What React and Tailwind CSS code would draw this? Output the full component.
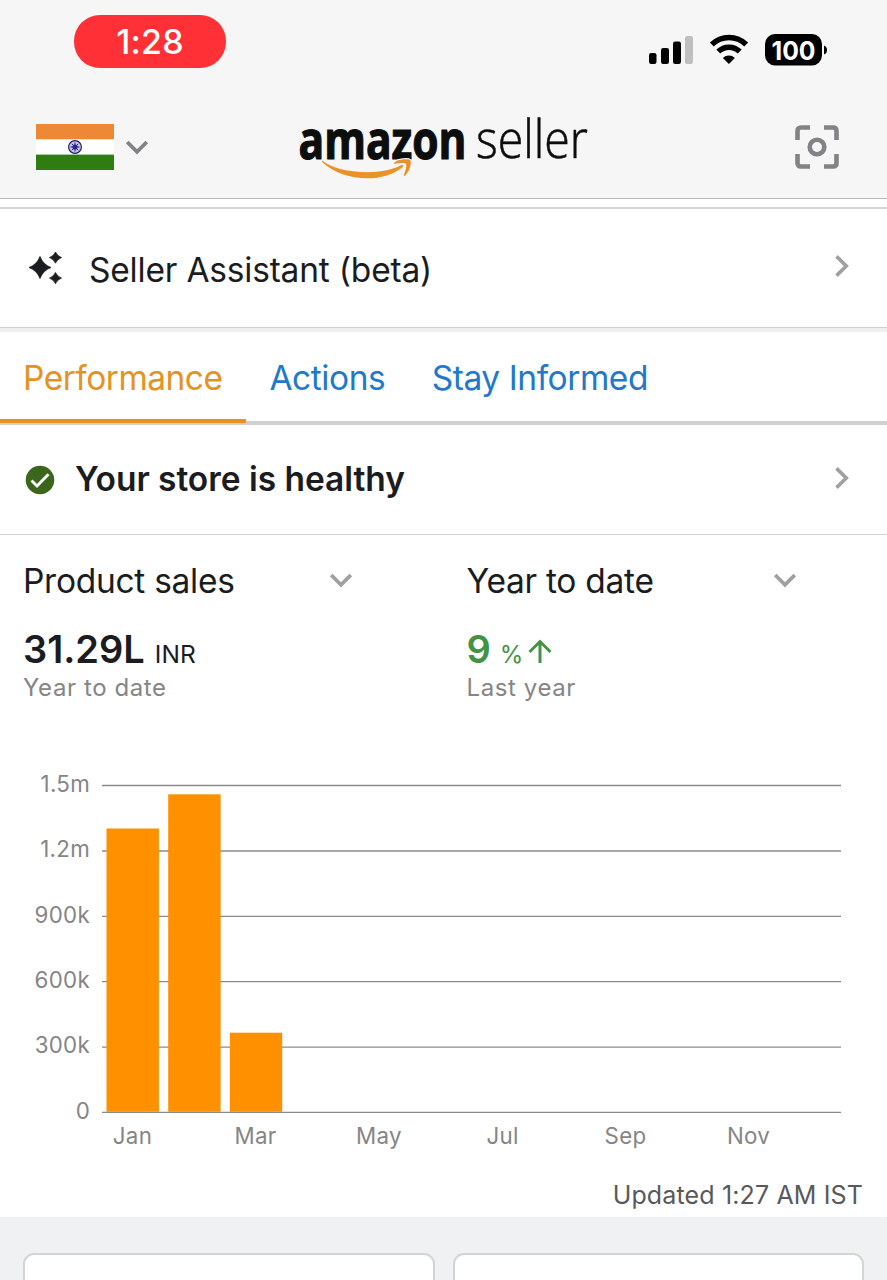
const tabs = [
  { label: 'Performance', active: true },
  { label: 'Actions' },
  { label: 'Stay Informed' },
]

const bars = [
  { month: 'Jan', x: 106.5, top: 68.5 },
  { month: 'Feb', x: 168.2, top: 34.3 },
  { month: 'Mar', x: 229.8, top: 272.7 },
]

const yTicks = [
  { label: '1.5m', y: 25.5 },
  { label: '1.2m', y: 91 },
  { label: '900k', y: 156.3 },
  { label: '600k', y: 221.6 },
  { label: '300k', y: 287.1 },
  { label: '0', y: 352.3 },
]

const xTicks = [
  { label: 'Jan', x: 132.5 },
  { label: 'Mar', x: 255.5 },
  { label: 'May', x: 379 },
  { label: 'Jul', x: 502.5 },
  { label: 'Sep', x: 625.5 },
  { label: 'Nov', x: 748.5 },
]

function ChevronRight() {
  return (
    <svg width="16" height="24" viewBox="0 0 16 24" fill="none" stroke="#a0a0a0" strokeWidth="3.6">
      <path d="M2.5 2.4 L12.3 12 L2.5 21.6" />
    </svg>
  )
}

function ChevronDown({ color = '#a0a0a0' }) {
  return (
    <svg width="24" height="16" viewBox="0 0 24 16" fill="none" stroke={color} strokeWidth="3.8">
      <path d="M2.2 2 L12 11.8 L21.8 2" />
    </svg>
  )
}

function StatusBar() {
  return (
    <div className="flex items-start justify-between pl-[74px] pr-[59px] pt-[15px]">
      <div className="flex h-[53px] w-[152px] items-center justify-center rounded-[26px] bg-[#ff3136] text-[34px] font-medium tracking-[0.2px] text-white">
        1:28
      </div>
      <div className="mt-[19px] flex">
        <svg width="180" height="32" viewBox="648 34 180 32">
          <rect x="649" y="53" width="7.5" height="11" rx="2.2" />
          <rect x="661" y="48" width="8" height="16" rx="2.2" />
          <rect x="673" y="41.5" width="8" height="22.5" rx="2.2" />
          <rect x="685" y="36" width="8" height="28" rx="2.2" fill="#bfbfbf" />
          <g fill="none" stroke="#000" strokeWidth="5.6">
            <path d="M711.8 44.6 A24.5 24.5 0 0 1 746.2 44.6" />
            <path d="M718.3 51.6 A15.4 15.4 0 0 1 739.7 51.6" />
          </g>
          <path d="M728.9 64 L722.9 58 A8.6 8.6 0 0 1 734.9 58 Z" />
          <rect x="765" y="34" width="57" height="31.5" rx="10" />
          <path d="M824 45.5 Q827 46.5 827 50 Q827 53.5 824 54.5 Z" />
          <text x="793.5" y="59.5" textAnchor="middle" textLength="44" fill="#fff" fontSize="26" fontWeight="700" fontFamily="Inter, sans-serif" lengthAdjust="spacingAndGlyphs">100</text>
        </svg>
      </div>
    </div>
  )
}

function IndiaFlag() {
  return (
    <svg width="78" height="46" viewBox="0 0 78 46">
      <rect width="78" height="46" fill="#fff" />
      <rect width="78" height="15.3" fill="#ed8936" />
      <rect y="30.6" width="78" height="15.4" fill="#2f7d12" />
      <circle cx="39" cy="23" r="6.4" fill="#c5c3e6" stroke="#26215f" strokeWidth="1.2" />
      <g stroke="#2a2389" strokeWidth="1">
        <path d="M34.5 23 H43.5 M39 18.5 V27.5 M35.8 19.8 L42.2 26.2 M35.8 26.2 L42.2 19.8" />
      </g>
      <circle cx="39" cy="23" r="2.6" fill="#2a2389" />
    </svg>
  )
}

function Logo() {
  return (
    <svg width="296" height="86" viewBox="298 96 296 86">
      <g fontFamily="Open Sans, sans-serif" fill="#0c0d0d" stroke="#0c0d0d">
        <text transform="translate(298.5 158.6) scale(0.8 1)" textLength="210" lengthAdjust="spacingAndGlyphs" fontSize="53" fontWeight="700" strokeWidth="1.2">amazon</text>
        <text transform="translate(476 158.3) scale(0.9 1)" textLength="124.4" lengthAdjust="spacingAndGlyphs" fontSize="52.5" fontWeight="300" strokeWidth="0.6">seller</text>
      </g>
      <g stroke="#f6f6f6" strokeWidth="2.4" fill="#ea9228" paintOrder="stroke">
        <path d="M323 161 C336 172.5 379 177 401 165.3 C402.7 164.3 403.8 166 402.6 167.3 C383 183.5 343 182 322.4 162.3 C321.6 161.2 322 160.4 323 161 Z" />
        <path d="M394 163 C398 158.8 408.5 158.7 410.3 160.3 C412 162.5 409.5 172 405.2 175.4 C404 176 403.4 175.5 404 174.3 C405.5 171 407 166 406 164 C404.6 162.5 399.5 163 395 163.7 C393.8 163.8 393.3 163.5 394 163 Z" />
      </g>
    </svg>
  )
}

function ScanIcon() {
  return (
    <svg width="44" height="44" viewBox="0 0 44 44" fill="none" stroke="#828287" strokeWidth="4.6">
      <path d="M2.5 15 V6 Q2.5 2.5 6 2.5 H15" />
      <path d="M29 2.5 H38 Q41.5 2.5 41.5 6 V15" />
      <path d="M41.5 29 V38 Q41.5 41.5 38 41.5 H29" />
      <path d="M15 41.5 H6 Q2.5 41.5 2.5 38 V29" />
      <circle cx="22" cy="22" r="7.3" />
    </svg>
  )
}

function Sparkles() {
  return (
    <svg width="36" height="34" viewBox="28 251 36 34" fill="#1b1c1f" stroke="#1b1c1f" strokeWidth="0.8" strokeLinejoin="round">
      <path d="M40 256.5 Q43 264.5 51 267.5 Q43 270.5 40 278.5 Q37 270.5 29 267.5 Q37 264.5 40 256.5 Z" />
      <path d="M55.5 252 Q57.2 256 61.5 257.6 Q57.2 259.2 55.5 263.2 Q53.8 259.2 49.5 257.6 Q53.8 256 55.5 252 Z" />
      <path d="M55.5 272.5 Q57.2 276.5 61.5 278.1 Q57.2 279.7 55.5 283.7 Q53.8 279.7 49.5 278.1 Q53.8 276.5 55.5 272.5 Z" />
    </svg>
  )
}

function Header() {
  return (
    <header className="h-[199px] shrink-0 border-b border-[#b9b9bb] bg-[#f6f6f6]">
      <StatusBar />
      <div className="mt-7 flex items-start pl-9">
        <div className="mt-7"><IndiaFlag /></div>
        <div className="ml-[11px] mt-11"><ChevronDown color="#828287" /></div>
        <div className="ml-[149px]"><Logo /></div>
        <div className="ml-[201px] mt-[29px]"><ScanIcon /></div>
      </div>
    </header>
  )
}

function Metric({ title, children, caption }) {
  return (
    <div className="w-[443.5px] pl-[23px]">
      <div className="flex items-center">
        <h2 className="w-[306px] text-[33.5px] leading-[40px] tracking-[-0.28px] text-[#1b1c1f]">{title}</h2>
        <ChevronDown />
      </div>
      <div className="mt-[25px] flex h-12 items-baseline">{children}</div>
      <p className="text-[24px] leading-[28px] tracking-[0.6px] text-[#858585]">{caption}</p>
    </div>
  )
}

function SalesChart() {
  return (
    <svg className="block" width="887" height="400" viewBox="0 0 887 400" fontFamily="Inter, sans-serif" fontSize="22.3" fill="#858585">
      {yTicks.map(t => (
        <g key={t.label}>
          <text x="90" y={t.y + 6.3} textAnchor="end" letterSpacing="0.3">{t.label}</text>
          <path d={`M102 ${t.y} H841`} stroke="#8a8a8a" strokeWidth="1.3" />
        </g>
      ))}
      {bars.map(b => (
        <rect key={b.month} x={b.x} y={b.top} width="52.4" height={351.8 - b.top} fill="#ff9100" />
      ))}
      {xTicks.map(t => (
        <text key={t.label} x={t.x} y="383.5" textAnchor="middle" letterSpacing="0.3">{t.label}</text>
      ))}
    </svg>
  )
}

export default function App() {
  return (
    <div className="flex h-[1280px] w-[887px] flex-col overflow-hidden bg-white font-['Inter',sans-serif]">
      <Header />
      <div className="mt-2 h-[2px] shrink-0 bg-[#d5d5d7]" />

      <div className="flex h-[118px] shrink-0 items-center pl-7 pr-[37px]">
        <Sparkles />
        <span className="ml-[25px] mt-[4px] flex-1 text-[33.5px] tracking-[-0.2px] text-[#1b1c1f]">Seller Assistant (beta)</span>
        <div className="-mt-[4px]"><ChevronRight /></div>
      </div>
      <div className="h-[5px] shrink-0 border-t border-[#cfcfcf] bg-[#f0f0f1]" />

      <nav className="flex h-[93px] shrink-0 border-b-4 border-[#d0d0d0]">
        {tabs.map(t => (
          <div
            key={t.label}
            className={
              t.active
                ? 'h-[91px] border-b-4 border-[#ea9220] pl-[23px] pr-6 pt-[21px] text-[33.5px] tracking-[-0.52px] text-[#e6921f]'
                : 'h-[91px] pl-[23px] pr-[23.5px] pt-[21px] text-[33.5px] tracking-[-0.44px] text-[#2179cb]'
            }
          >
            {t.label}
          </div>
        ))}
      </nav>

      <div className="flex h-[110px] shrink-0 items-center border-b border-[#d4d4d4] pl-[25px] pr-[37px]">
        <svg width="30" height="30" viewBox="0 0 30 30">
          <circle cx="15" cy="15" r="14.3" fill="#3b661c" />
          <path d="M6.5 15.5 L12 21 L23.5 9.2" fill="none" stroke="#fff" strokeWidth="2.8" />
        </svg>
        <span className="ml-5 flex-1 text-[33.5px] font-semibold tracking-[-0.04px] text-[#1b1c1f]">Your store is healthy</span>
        <div className="-mt-[4px]"><ChevronRight /></div>
      </div>

      <section className="flex shrink-0 pt-[26px]">
        <Metric title="Product sales" caption="Year to date">
          <span className="text-[38px] leading-[46px] font-semibold text-[#1b1c1f]">31.29L</span>
          <span className="ml-[10px] text-[24.5px] leading-[30px] text-[#1b1c1f]">INR</span>
        </Metric>
        <Metric title="Year to date" caption="Last year">
          <span className="text-[38px] leading-[46px] font-semibold text-[#439343]">9</span>
          <span className="ml-[9px] text-[24px] leading-[30px] text-[#439343]">%</span>
          <svg className="ml-[5px]" width="24" height="24" viewBox="0 0 24 24" fill="none" stroke="#439343" strokeWidth="3">
            <path d="M12 24 V2.5 M1.5 13 L12 2.5 L22.5 13" />
          </svg>
        </Metric>
      </section>

      <div className="mt-[58px] shrink-0"><SalesChart /></div>

      <p className="mt-[19px] h-[38px] shrink-0 pr-6 text-right text-[25px] leading-[32px] tracking-[0.14px] text-[#58595b]">
        Updated 1:27 AM IST
      </p>

      <div className="grid flex-1 grid-cols-2 gap-[18px] bg-[#eff1f3] px-[23px] pt-9">
        <div className="h-20 rounded-[11px] border-2 border-[#d2d5d6] bg-white" />
        <div className="h-20 rounded-[11px] border-2 border-[#d2d5d6] bg-white" />
      </div>
    </div>
  )
}
